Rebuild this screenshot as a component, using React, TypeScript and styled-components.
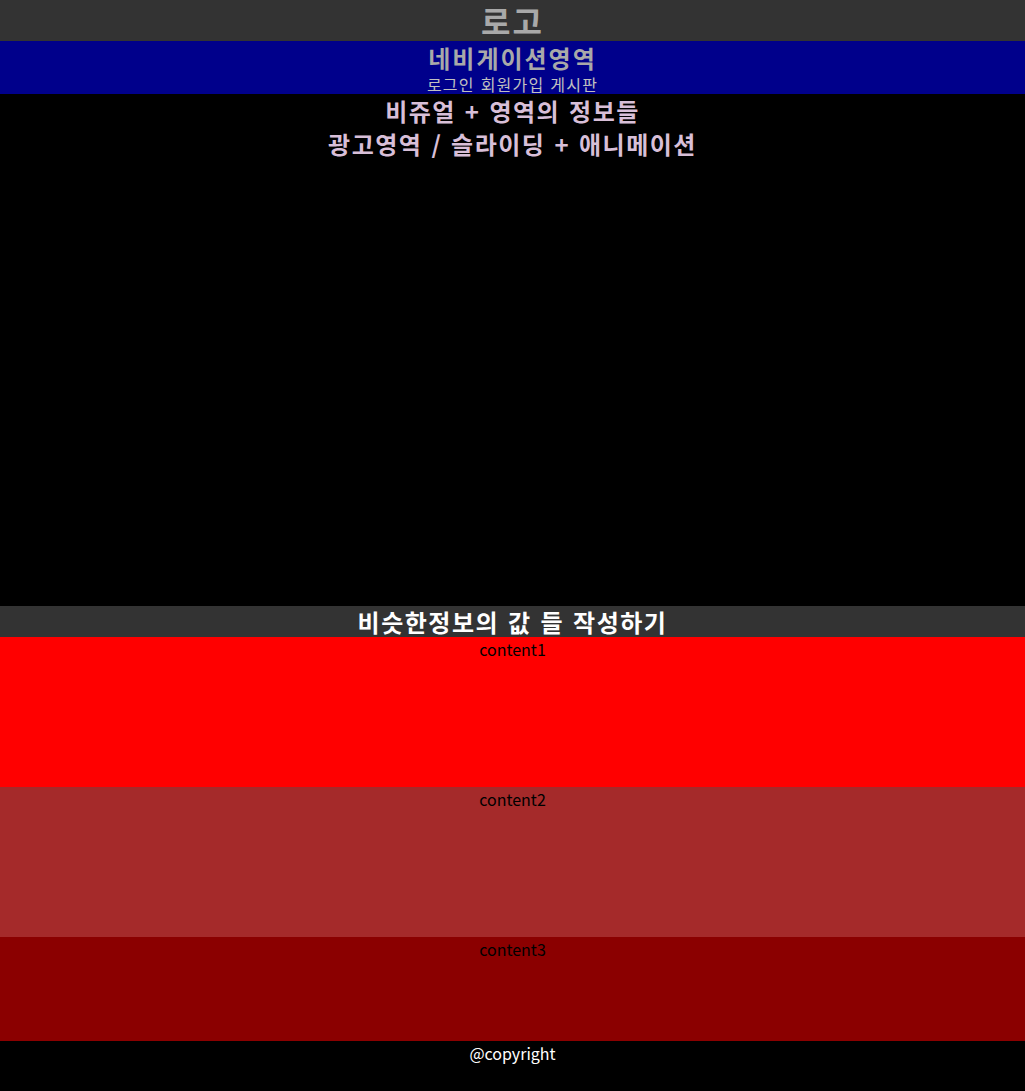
import React from "react";
import styled, { createGlobalStyle } from "styled-components";

const GlobalStyle = createGlobalStyle`
  html, body {
    margin: 0;
    padding: 0;
    background: #000;
  }
  body {
    font-family: "Noto Sans CJK KR", "Noto Sans", sans-serif;
  }
  * { box-sizing: border-box; }
`;

const Page = styled.div`
  display: flex;
  flex-direction: column;
  width: 100%;
`;

const Header = styled.header`
  background: #333333;
  height: 41px;
  display: flex;
  justify-content: center;
  align-items: center;
`;

const Logo = styled.h1`
  margin: 0;
  font-size: 32px;
  line-height: 41px;
  font-weight: 700;
  letter-spacing: 2px;
  color: #a9a9a9;
`;

const Nav = styled.nav`
  background: #00008b;
  height: 53px;
  display: flex;
  flex-direction: column;
  align-items: center;
`;

const NavTitle = styled.h2`
  margin: 0;
  font-size: 24px;
  line-height: 33px;
  font-weight: 700;
  letter-spacing: 2px;
  color: #a9a9a9;
`;

const NavLinks = styled.ul`
  margin: 0;
  padding: 0;
  list-style: none;
  display: flex;
  gap: 6px;
  font-size: 16px;
  line-height: 20px;
  letter-spacing: 1.2px;
  color: #c0c0c0;
`;

const NavItem = styled.li`
  margin: 0;
`;

const Visual = styled.section`
  background: #000;
  height: 512px;
  display: flex;
  flex-direction: column;
  align-items: center;
`;

const VisualText = styled.h2`
  margin: 0;
  font-size: 24px;
  line-height: 33px;
  font-weight: 700;
  letter-spacing: 1.5px;
  color: #d8bfd8;
  text-align: center;
  word-spacing: 2px;
`;

const SectionTitle = styled.h2`
  margin: 0;
  background: #333333;
  height: 31px;
  font-size: 24px;
  line-height: 31px;
  font-weight: 700;
  letter-spacing: 1.5px;
  color: #ffffff;
  text-align: center;
  word-spacing: 2px;
`;

const Content = styled.div<{ $bg: string; $h: number }>`
  background: ${(p) => p.$bg};
  height: ${(p) => p.$h}px;
  font-size: 16px;
  line-height: 24px;
  color: #000;
  text-align: center;
`;

const Footer = styled.footer`
  background: #000;
  height: 50px;
  font-size: 16px;
  line-height: 24px;
  color: #fff;
  text-align: center;
`;

export default function App() {
  return (
    <>
      <GlobalStyle />
      <Page>
        <Header>
          <Logo>로고</Logo>
        </Header>
        <Nav>
          <NavTitle>네비게이션영역</NavTitle>
          <NavLinks>
            <NavItem>로그인</NavItem>
            <NavItem>회원가입</NavItem>
            <NavItem>게시판</NavItem>
          </NavLinks>
        </Nav>
        <Visual>
          <VisualText>
            비쥬얼 + 영역의 정보들
            <br />
            광고영역 / 슬라이딩 + 애니메이션
          </VisualText>
        </Visual>
        <SectionTitle>비슷한정보의 값 들 작성하기</SectionTitle>
        <Content $bg="#ff0000" $h={150}>content1</Content>
        <Content $bg="#a52a2a" $h={150}>content2</Content>
        <Content $bg="#8b0000" $h={104}>content3</Content>
        <Footer>@copyright</Footer>
      </Page>
    </>
  );
}
